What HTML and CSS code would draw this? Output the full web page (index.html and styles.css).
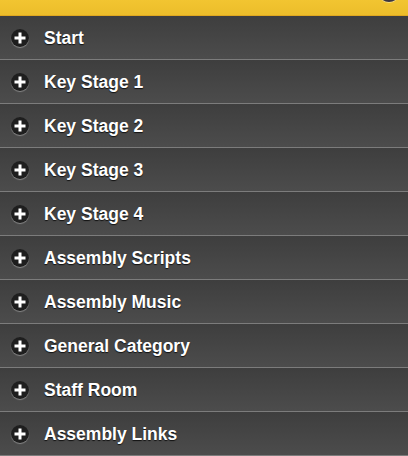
FILE: index.html
```html
<!DOCTYPE html>
<html>
<head>
<meta charset="utf-8">
<link rel="stylesheet" href="styles.css">
</head>
<body>
<div class="header"><span class="hdr-btn"></span></div>
<ul class="menu">
  <li class="item"><span class="icon"><svg viewBox="0 0 18 18" width="18" height="18"><path d="M9 3.5v11M3.5 9h11" stroke="#fff" stroke-width="3"/></svg></span><span class="label">Start</span></li>
  <li class="item"><span class="icon"><svg viewBox="0 0 18 18" width="18" height="18"><path d="M9 3.5v11M3.5 9h11" stroke="#fff" stroke-width="3"/></svg></span><span class="label">Key Stage 1</span></li>
  <li class="item"><span class="icon"><svg viewBox="0 0 18 18" width="18" height="18"><path d="M9 3.5v11M3.5 9h11" stroke="#fff" stroke-width="3"/></svg></span><span class="label">Key Stage 2</span></li>
  <li class="item"><span class="icon"><svg viewBox="0 0 18 18" width="18" height="18"><path d="M9 3.5v11M3.5 9h11" stroke="#fff" stroke-width="3"/></svg></span><span class="label">Key Stage 3</span></li>
  <li class="item"><span class="icon"><svg viewBox="0 0 18 18" width="18" height="18"><path d="M9 3.5v11M3.5 9h11" stroke="#fff" stroke-width="3"/></svg></span><span class="label">Key Stage 4</span></li>
  <li class="item"><span class="icon"><svg viewBox="0 0 18 18" width="18" height="18"><path d="M9 3.5v11M3.5 9h11" stroke="#fff" stroke-width="3"/></svg></span><span class="label">Assembly Scripts</span></li>
  <li class="item"><span class="icon"><svg viewBox="0 0 18 18" width="18" height="18"><path d="M9 3.5v11M3.5 9h11" stroke="#fff" stroke-width="3"/></svg></span><span class="label">Assembly Music</span></li>
  <li class="item"><span class="icon"><svg viewBox="0 0 18 18" width="18" height="18"><path d="M9 3.5v11M3.5 9h11" stroke="#fff" stroke-width="3"/></svg></span><span class="label">General Category</span></li>
  <li class="item"><span class="icon"><svg viewBox="0 0 18 18" width="18" height="18"><path d="M9 3.5v11M3.5 9h11" stroke="#fff" stroke-width="3"/></svg></span><span class="label">Staff Room</span></li>
  <li class="item"><span class="icon"><svg viewBox="0 0 18 18" width="18" height="18"><path d="M9 3.5v11M3.5 9h11" stroke="#fff" stroke-width="3"/></svg></span><span class="label">Assembly Links</span></li>
</ul>
</body>
</html>
```
FILE: styles.css
```css
html, body {
  margin: 0;
  padding: 0;
  background: #444;
  overflow: hidden;
}
body {
  width: 408px;
  height: 456px;
  font-family: "Liberation Sans", Arial, sans-serif;
}
.header {
  position: relative;
  height: 15px;
  background: linear-gradient(#f2c531, #ecbd2a);
  border-bottom: 1px solid #e0a820;
}
.hdr-btn {
  position: absolute;
  right: 8px;
  top: -20px;
  width: 22px;
  height: 22px;
  border-radius: 50%;
  background: #3a3540;
  box-shadow: 0 1px 0 rgba(255,255,255,.4);
}
.menu {
  list-style: none;
  margin: 0;
  padding: 0;
}
.item {
  display: flex;
  align-items: center;
  height: 43px;
  background: linear-gradient(#3e3e3e, #4c4c4c);
  border-bottom: 1px solid #7c7c7c;
  box-sizing: content-box;
}
.icon {
  width: 18px;
  height: 18px;
  margin-left: 11px;
  margin-right: 15px;
  margin-top: 1px;
  border-radius: 50%;
  background: #1e1e1e;
  box-shadow: 0 1px 1px rgba(255,255,255,.35);
  display: flex;
}
.label {
  color: #fff;
  font-weight: bold;
  font-size: 17.5px;
  margin-top: 1px;
  text-shadow: 0 1px 1px #111;
}
```
